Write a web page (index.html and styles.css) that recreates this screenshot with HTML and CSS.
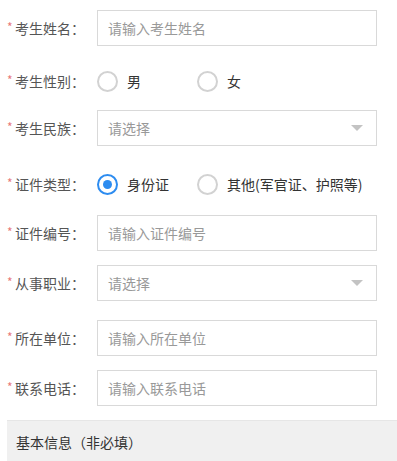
FILE: index.html
```html
<!DOCTYPE html>
<html lang="zh-CN">
<head>
    <meta charset="UTF-8">
    <meta name="viewport" content="width=device-width, initial-scale=1.0">
    <title>考生信息</title>
    <link rel="stylesheet" href="styles.css">
</head>
<body>
    <form class="form">
        <div class="form-item item-name">
            <label class="form-label"><span class="required">*</span>考生姓名：</label>
            <input class="form-input" type="text" placeholder="请输入考生姓名">
        </div>
        <div class="form-item radio-item item-gender">
            <label class="form-label"><span class="required">*</span>考生性别：</label>
            <div class="radio-group">
                <label class="radio"><span class="radio-circle"></span>男</label>
                <label class="radio"><span class="radio-circle"></span>女</label>
            </div>
        </div>
        <div class="form-item item-nation">
            <label class="form-label"><span class="required">*</span>考生民族：</label>
            <div class="form-select">
                <span class="select-text">请选择</span>
                <span class="select-arrow"></span>
            </div>
        </div>
        <div class="form-item radio-item item-idtype">
            <label class="form-label"><span class="required">*</span>证件类型：</label>
            <div class="radio-group">
                <label class="radio checked"><span class="radio-circle"></span>身份证</label>
                <label class="radio"><span class="radio-circle"></span>其他(军官证、护照等)</label>
            </div>
        </div>
        <div class="form-item item-idno">
            <label class="form-label"><span class="required">*</span>证件编号：</label>
            <input class="form-input" type="text" placeholder="请输入证件编号">
        </div>
        <div class="form-item item-job">
            <label class="form-label"><span class="required">*</span>从事职业：</label>
            <div class="form-select">
                <span class="select-text">请选择</span>
                <span class="select-arrow"></span>
            </div>
        </div>
        <div class="form-item item-unit">
            <label class="form-label"><span class="required">*</span>所在单位：</label>
            <input class="form-input" type="text" placeholder="请输入所在单位">
        </div>
        <div class="form-item item-phone">
            <label class="form-label"><span class="required">*</span>联系电话：</label>
            <input class="form-input" type="text" placeholder="请输入联系电话">
        </div>
    </form>
    <div class="section-title">基本信息（非必填）</div>
</body>
</html>
```

FILE: styles.css
```css
body {
    margin: 0;
    padding: 10px 0 0 7px;
    font-family: "Noto Sans CJK SC", "Noto Sans", sans-serif;
    font-size: 14px;
    color: #333;
    background: #fff;
}

.form-item {
    display: flex;
    align-items: center;
    height: 36px;
    margin-bottom: 14px;
}

.item-name { margin-bottom: 17px; }
.item-gender { margin-bottom: 11px; }
.item-nation { margin-bottom: 20px; }
.item-idtype { margin-bottom: 13px; }
.item-job { margin-bottom: 19px; }

.form-label {
    width: 90px;
    flex-shrink: 0;
    color: #555;
    white-space: nowrap;
}

.required {
    display: inline-block;
    width: 8px;
    color: #e8797b;
    font-size: 12px;
    vertical-align: 2px;
}

.form-input,
.form-select {
    box-sizing: border-box;
    width: 280px;
    height: 36px;
    border: 1px solid #d9d9d9;
    padding: 0 10px;
    font-family: inherit;
    font-size: 14px;
    color: #333;
    outline: none;
}

.form-input::placeholder {
    color: #999;
}

.form-select {
    display: flex;
    align-items: center;
    justify-content: space-between;
}

.select-text {
    color: #999;
}

.select-arrow {
    width: 0;
    height: 0;
    margin-right: 3px;
    border-left: 6px solid transparent;
    border-right: 6px solid transparent;
    border-top: 6px solid #c3c3c3;
}

.radio-group {
    display: flex;
    align-items: center;
}

.radio {
    display: flex;
    align-items: center;
    min-width: 100px;
    color: #333;
    white-space: nowrap;
}

.radio-circle {
    box-sizing: border-box;
    width: 21px;
    height: 21px;
    border: 2px solid #d2d2d2;
    border-radius: 50%;
    margin-right: 9px;
    display: flex;
    align-items: center;
    justify-content: center;
}

.radio.checked .radio-circle {
    border: 2px solid #2d8cf0;
}

.radio.checked .radio-circle::after {
    content: "";
    width: 9px;
    height: 9px;
    border-radius: 50%;
    background: #2d8cf0;
}

.section-title {
    margin-top: 14px;
    height: 41px;
    padding-left: 9px;
    display: flex;
    align-items: center;
    background: #f0f0f0;
    border-top: 1px solid #e6e6e6;
    color: #333;
}
```
